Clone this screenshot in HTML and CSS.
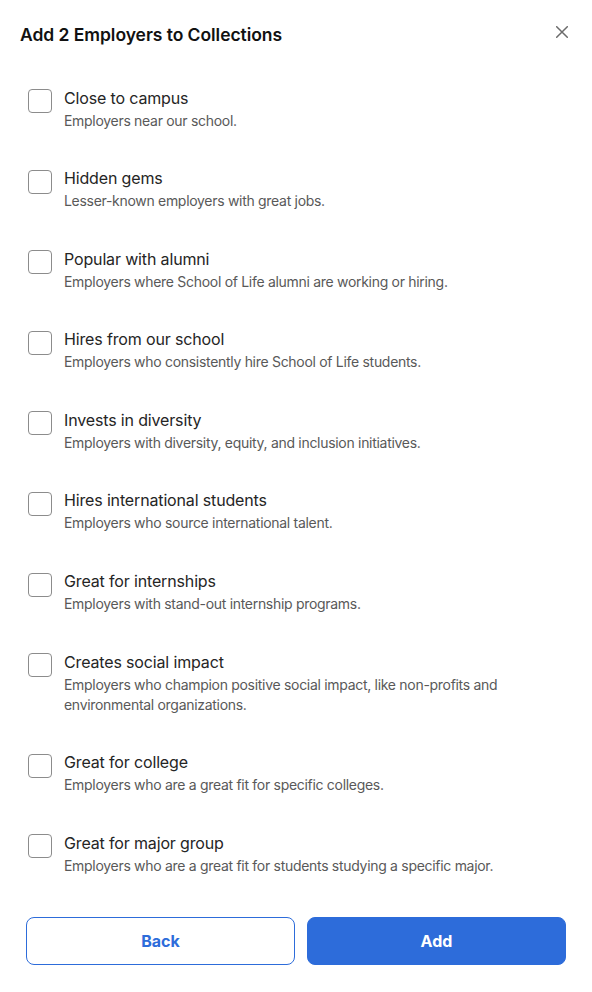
FILE: index.html
```html
<!DOCTYPE html>
<html lang="en">
<head>
<meta charset="utf-8">
<title>Add 2 Employers to Collections</title>
<link rel="stylesheet" href="styles.css">
</head>
<body>
<div class="modal">
  <div class="header">
    <h1 class="title">Add 2 Employers to Collections</h1>
    <button class="close" aria-label="Close">
      <svg width="12" height="12" viewBox="0 0 12 12"><path d="M0.7 0.7 L11.3 11.3 M11.3 0.7 L0.7 11.3" stroke="#6b6b6b" stroke-width="1.5" stroke-linecap="round" fill="none"/></svg>
    </button>
  </div>
  <ul class="list">
    <li class="row"><span class="box"></span><div class="text"><div class="label">Close to campus</div><div class="desc">Employers near our school.</div></div></li>
    <li class="row"><span class="box"></span><div class="text"><div class="label">Hidden gems</div><div class="desc">Lesser-known employers with great jobs.</div></div></li>
    <li class="row"><span class="box"></span><div class="text"><div class="label">Popular with alumni</div><div class="desc">Employers where School of Life alumni are working or hiring.</div></div></li>
    <li class="row"><span class="box"></span><div class="text"><div class="label">Hires from our school</div><div class="desc">Employers who consistently hire School of Life students.</div></div></li>
    <li class="row"><span class="box"></span><div class="text"><div class="label">Invests in diversity</div><div class="desc">Employers with diversity, equity, and inclusion initiatives.</div></div></li>
    <li class="row"><span class="box"></span><div class="text"><div class="label">Hires international students</div><div class="desc">Employers who source international talent.</div></div></li>
    <li class="row"><span class="box"></span><div class="text"><div class="label">Great for internships</div><div class="desc">Employers with stand-out internship programs.</div></div></li>
    <li class="row"><span class="box"></span><div class="text"><div class="label">Creates social impact</div><div class="desc">Employers who champion positive social impact, like non-profits and environmental organizations.</div></div></li>
    <li class="row"><span class="box"></span><div class="text"><div class="label">Great for college</div><div class="desc">Employers who are a great fit for specific colleges.</div></div></li>
    <li class="row"><span class="box"></span><div class="text"><div class="label">Great for major group</div><div class="desc">Employers who are a great fit for students studying a specific major.</div></div></li>
  </ul>
  <div class="actions">
    <button class="btn btn-back">Back</button>
    <button class="btn btn-add">Add</button>
  </div>
</div>
</body>
</html>
```
FILE: styles.css
```css
* { box-sizing: border-box; }
html, body { margin: 0; padding: 0; background: #fff; }
body {
  font-family: Inter, "Noto Sans", "Liberation Sans", sans-serif;
  color: #222;
}
.modal { padding-top: 23px; }
.header {
  display: flex;
  justify-content: space-between;
  align-items: flex-start;
  padding: 0 24px 0 20px;
}
.title {
  margin: 0;
  font-size: 17.5px;
  line-height: 24px;
  font-weight: 600;
  color: #111;
  letter-spacing: -0.05px;
}
.close {
  margin-top: 3px;
  padding: 0;
  border: 0;
  background: none;
  width: 12px;
  height: 12px;
  display: block;
}
.close svg { display: block; }
.list {
  list-style: none;
  margin: 38.5px 0 0 0;
  padding: 0 26px 0 28px;
  display: flex;
  flex-direction: column;
  gap: 35.6px;
}
.row {
  display: flex;
  align-items: flex-start;
  gap: 12px;
}
.box {
  flex: none;
  width: 24px;
  height: 24px;
  margin-top: 3.5px;
  border: 1px solid #8c8c8c;
  border-radius: 4px;
  background: #fff;
}
.label {
  font-size: 16px;
  line-height: 24px;
  color: #252525;
  letter-spacing: -0.15px;
}
.desc {
  margin-top: 1px;
  font-size: 14px;
  line-height: 20px;
  color: #595959;
  letter-spacing: -0.3px;
}
.actions {
  display: flex;
  gap: 12px;
  margin-top: 41.5px;
  padding: 0 26px;
}
.btn {
  height: 48px;
  border-radius: 8px;
  font-family: inherit;
  font-size: 16px;
  font-weight: 700;
  padding: 0;
  flex-basis: 0;
}
.btn-back {
  flex-grow: 269;
  background: #fff;
  color: #2d6cda;
  border: 1px solid #2d6cda;
}
.btn-add {
  flex-grow: 259;
  background: #2d6cda;
  color: #fff;
  border: 1px solid #2d6cda;
}
```
